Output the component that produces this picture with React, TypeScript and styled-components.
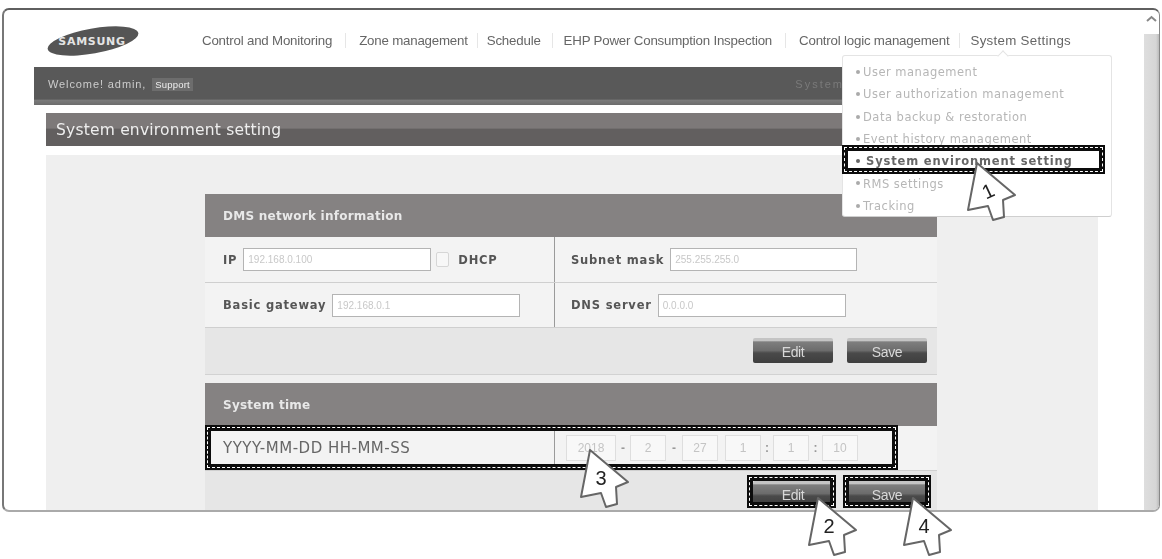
import React from 'react';
import styled, { createGlobalStyle } from 'styled-components';

const GlobalStyle = createGlobalStyle`
  html, body {
    margin: 0;
    padding: 0;
    background: #fff;
    overflow: hidden;
  }
  * {
    box-sizing: border-box;
  }
`;

const Page = styled.div`
  position: relative;
  width: 1162px;
  height: 559px;
  padding: 8px 2px 47px;
  filter: blur(0.6px);
  font-family: 'Liberation Sans', Arial, sans-serif;
`;

const Frame = styled.div`
  display: flex;
  height: 100%;
  border: 1px solid #888;
  border-top: 2px solid #5f5f5f;
  border-left: 2px solid #777;
  border-bottom: 2px solid #aaa;
  border-radius: 7px;
  overflow: hidden;
  background: #fff;
`;

const Main = styled.div`
  flex: 1;
  min-width: 0;
  display: flex;
  flex-direction: column;
`;

const ScrollBar = styled.div`
  width: 15px;
  display: flex;
  flex-direction: column;
`;

const ScrollButton = styled.div`
  height: 24px;
  display: flex;
  justify-content: center;
  padding-top: 5px;
  color: #888;
`;

const ScrollTrack = styled.div`
  flex: 1;
  background: linear-gradient(to right, #dedede 0, #d6d6d6 80%, #bbb 100%);
`;

const Header = styled.div`
  height: 57px;
  display: flex;
  align-items: center;
  padding: 4px 0 0 43px;
`;

const LogoBox = styled.svg`
  width: 92px;
  height: 34px;
  flex: none;
`;

const Nav = styled.nav`
  display: flex;
  align-items: center;
  margin-left: 63px;
`;

const NavItem = styled.span<{ $gap: number }>`
  font-size: 13.3px;
  color: #666;
  letter-spacing: -0.2px;
  white-space: nowrap;
  padding-right: ${(props) => props.$gap}px;
  margin-right: ${(props) => props.$gap}px;
  border-right: 1px solid #e6e6e6;
  &:last-child {
    border-right: none;
    letter-spacing: 0.3px;
  }
`;

const WelcomeBar = styled.div`
  height: 38px;
  margin: 0 45px 0 30px;
  display: flex;
  align-items: center;
  justify-content: space-between;
  padding: 0 255px 4px 14px;
  background: linear-gradient(to bottom, #595959 0, #595959 84%, #7a7a7a 88%, #6c6c6c 100%);
  font-size: 11px;
  color: #ccc;
  letter-spacing: 0.9px;
`;

const Support = styled.span`
  color: #eee;
  font-size: 9.5px;
  letter-spacing: 0.2px;
  margin-left: 6px;
  padding: 1px 3px;
  background: #6d6d6d;
`;

const Faint = styled.span`
  color: #7a7a7a;
  letter-spacing: 2px;
`;

const TitleBar = styled.div`
  height: 33px;
  margin: 8px 46px 0 42px;
  padding-left: 10px;
  display: flex;
  align-items: center;
  background: linear-gradient(to bottom, #7d7979 0, #7d7979 45%, #625f5f 50%, #625f5f 100%);
  font-family: 'DejaVu Sans', sans-serif;
  font-size: 15.5px;
  color: #eee;
  letter-spacing: 0.2px;
`;

const Content = styled.div`
  flex: 1;
  min-height: 0;
  margin: 9px 46px 0 42px;
  padding: 39px 0 0 159px;
  background: #efefef;
  overflow: hidden;
`;

const Panel = styled.section`
  width: 732px;
  margin-bottom: 8px;
  background: #e6e6e6;
  border-bottom: 1px solid #d2d2d2;
`;

const PanelHeader = styled.div`
  height: 43px;
  display: flex;
  align-items: center;
  padding-left: 18px;
  background: #858282;
  font-family: 'DejaVu Sans', sans-serif;
  font-size: 12px;
  font-weight: bold;
  letter-spacing: 0.25px;
  color: #e8e8e8;
`;

const Row = styled.div<{ $height: number }>`
  display: grid;
  grid-template-columns: 349px 1fr;
  height: ${(props) => props.$height}px;
  background: #f3f3f3;
  border-bottom: 1px solid #cfcfcf;
`;

const Cell = styled.div`
  display: flex;
  align-items: center;
  padding-left: 18px;
  & + & {
    padding-left: 11px;
    border-left: 1px solid #9a9a9a;
  }
`;

const FieldCell = styled(Cell)`
  gap: 6px;
  & + & {
    padding-left: 16px;
  }
`;

const Label = styled.span`
  font-family: 'DejaVu Sans', sans-serif;
  font-size: 11.5px;
  font-weight: bold;
  letter-spacing: 0.8px;
  color: #555;
  white-space: nowrap;
`;

const TimeLabel = styled.span`
  font-family: 'DejaVu Sans', sans-serif;
  font-size: 15px;
  letter-spacing: 0.5px;
  color: #666;
  white-space: nowrap;
`;

const Field = styled.div<{ $w: number }>`
  width: ${(props) => props.$w}px;
  height: 23px;
  flex: none;
  display: flex;
  align-items: center;
  padding-left: 4px;
  background: #fff;
  border: 1px solid #b4b4b4;
  font-size: 10px;
  color: #c8c8c8;
`;

const CheckBox = styled.span`
  width: 13px;
  height: 15px;
  margin: 0 3px 0 -1px;
  flex: none;
  background: #f7f7f7;
  border: 1px solid #d6d6d6;
  border-radius: 2px;
`;

const TimeField = styled.div<{ $w: number }>`
  width: ${(props) => props.$w}px;
  height: 26px;
  flex: none;
  display: flex;
  align-items: center;
  justify-content: center;
  background: #f8f8f8;
  border: 1px solid #dedede;
  font-size: 12px;
  color: #c4c4c4;
`;

const TimeSep = styled.span<{ $w: number }>`
  width: ${(props) => props.$w}px;
  flex: none;
  text-align: center;
  font-size: 12px;
  font-weight: bold;
  color: #999;
`;

const Footer = styled.div<{ $height: number }>`
  height: ${(props) => props.$height}px;
  display: flex;
  justify-content: flex-end;
  align-items: flex-start;
  gap: 14px;
  padding: 10px 10px 0 0;
`;

const Button = styled.button`
  width: 80px;
  height: 25px;
  padding: 2px 0 0;
  border: none;
  border-radius: 2px;
  background: linear-gradient(to bottom, #c4c4c4 0, #c4c4c4 10%, #7e7e7e 16%, #6c6c6c 50%, #4a4a4a 60%, #3e3e3e 100%);
  font-family: 'Liberation Sans', Arial, sans-serif;
  font-size: 14px;
  letter-spacing: -0.4px;
  color: #d8d8d8;
`;

const Menu = styled.div`
  position: absolute;
  left: 842px;
  top: 55px;
  width: 270px;
  height: 162px;
  padding: 5px 0 0 20px;
  background: #fff;
  border: 1px solid #e4e4e4;
  border-bottom-color: #cfcfcf;
  border-radius: 3px;
  &::before {
    content: '';
    position: absolute;
    left: 156px;
    top: -4px;
    width: 7px;
    height: 7px;
    background: #fff;
    border-left: 1px solid #e4e4e4;
    border-top: 1px solid #e4e4e4;
    transform: rotate(45deg);
  }
`;

const MenuItem = styled.div<{ $active?: boolean }>`
  position: relative;
  height: 22.3px;
  display: flex;
  align-items: center;
  font-family: 'DejaVu Sans', sans-serif;
  font-size: 11.5px;
  letter-spacing: ${(props) => (props.$active ? '0.85px' : '0.5px')};
  padding-left: ${(props) => (props.$active ? '3px' : '0')};
  font-weight: ${(props) => (props.$active ? 'bold' : 'normal')};
  color: ${(props) => (props.$active ? '#666' : '#b6b6b6')};
  white-space: nowrap;
  &::before {
    content: '';
    position: absolute;
    left: -7px;
    top: 9px;
    width: 4px;
    height: 4px;
    border-radius: 50%;
    background: ${(props) => (props.$active ? '#666' : '#aaa')};
  }
`;

const Callout = styled.div<{ $x: number; $y: number; $w: number; $h: number }>`
  position: absolute;
  left: ${(props) => props.$x}px;
  top: ${(props) => props.$y}px;
  width: ${(props) => props.$w}px;
  height: ${(props) => props.$h}px;
  border: 6px solid #0c0c0c;
  outline: 1.6px dashed #fff;
  outline-offset: -3.8px;
`;

const PointerSvg = styled.svg<{ $x: number; $y: number }>`
  position: absolute;
  left: ${(props) => props.$x - 12}px;
  top: ${(props) => props.$y - 2}px;
  width: 64px;
  height: 66px;
  overflow: visible;
`;

const Pointer = ({ x, y, n, rotate }: { x: number; y: number; n: string; rotate: number }) => (
  <PointerSvg $x={x} $y={y} viewBox="0 0 64 66">
    <polygon
      points="12,2 50,34 38,39 39,56 28,59 23,45 3,49"
      fill="#fff"
      stroke="#666"
      strokeWidth="2"
      strokeLinejoin="round"
    />
    <text
      x="23"
      y="37"
      fontFamily="Liberation Sans, sans-serif"
      fontSize="20"
      fill="#222"
      textAnchor="middle"
      transform={`rotate(${rotate} 23 30)`}
    >
      {n}
    </text>
  </PointerSvg>
);

const Logo = () => (
  <LogoBox viewBox="0 0 92 34">
    <ellipse cx="46" cy="17" rx="46" ry="12.5" fill="#555" transform="rotate(-10 46 17)" />
    <text
      x="45"
      y="21"
      textAnchor="middle"
      fontFamily="DejaVu Sans, sans-serif"
      fontWeight="bold"
      fontSize="11"
      letterSpacing="0.7"
      fill="#e4e4e4"
    >
      SAMSUNG
    </text>
  </LogoBox>
);

const navList = [
  { name: 'Control and Monitoring', gap: 13 },
  { name: 'Zone management', gap: 9 },
  { name: 'Schedule', gap: 11 },
  { name: 'EHP Power Consumption Inspection', gap: 13 },
  { name: 'Control logic management', gap: 10 },
  { name: 'System Settings', gap: 0 },
];

const menuList = [
  'User management',
  'User authorization management',
  'Data backup & restoration',
  'Event history management',
  'System environment setting',
  'RMS settings',
  'Tracking',
];

export default function App() {
  return (
    <Page>
      <GlobalStyle />
      <Frame>
        <Main>
          <Header>
            <Logo />
            <Nav>
              {navList.map((item) => (
                <NavItem key={item.name} $gap={item.gap}>
                  {item.name}
                </NavItem>
              ))}
            </Nav>
          </Header>
          <WelcomeBar>
            <span>
              Welcome! admin,<Support>Support</Support>
            </span>
            <Faint>System</Faint>
          </WelcomeBar>
          <TitleBar>System environment setting</TitleBar>
          <Content>
            <Panel>
              <PanelHeader>DMS network information</PanelHeader>
              <Row $height={46}>
                <FieldCell>
                  <Label>IP</Label>
                  <Field $w={188}>192.168.0.100</Field>
                  <CheckBox />
                  <Label>DHCP</Label>
                </FieldCell>
                <FieldCell>
                  <Label>Subnet mask</Label>
                  <Field $w={187}>255.255.255.0</Field>
                </FieldCell>
              </Row>
              <Row $height={45}>
                <FieldCell>
                  <Label>Basic gateway</Label>
                  <Field $w={188}>192.168.0.1</Field>
                </FieldCell>
                <FieldCell>
                  <Label>DNS server</Label>
                  <Field $w={188}>0.0.0.0</Field>
                </FieldCell>
              </Row>
              <Footer $height={46}>
                <Button>Edit</Button>
                <Button>Save</Button>
              </Footer>
            </Panel>
            <Panel>
              <PanelHeader>System time</PanelHeader>
              <Row $height={45}>
                <Cell>
                  <TimeLabel>YYYY-MM-DD HH-MM-SS</TimeLabel>
                </Cell>
                <Cell>
                  <TimeField $w={50}>2018</TimeField>
                  <TimeSep $w={14}>-</TimeSep>
                  <TimeField $w={36}>2</TimeField>
                  <TimeSep $w={16}>-</TimeSep>
                  <TimeField $w={36}>27</TimeField>
                  <TimeSep $w={7} />
                  <TimeField $w={36}>1</TimeField>
                  <TimeSep $w={12}>:</TimeSep>
                  <TimeField $w={36}>1</TimeField>
                  <TimeSep $w={13}>:</TimeSep>
                  <TimeField $w={36}>10</TimeField>
                </Cell>
              </Row>
              <Footer $height={46}>
                <Button>Edit</Button>
                <Button>Save</Button>
              </Footer>
            </Panel>
          </Content>
        </Main>
        <ScrollBar>
          <ScrollButton>
            <svg width="11" height="8" viewBox="0 0 11 8">
              <path d="M1 6 L5.5 2 L10 6" fill="none" stroke="#888" strokeWidth="2" />
            </svg>
          </ScrollButton>
          <ScrollTrack />
        </ScrollBar>
      </Frame>

      <Menu>
        {menuList.map((name) => (
          <MenuItem key={name} $active={name === 'System environment setting'}>
            {name}
          </MenuItem>
        ))}
      </Menu>

      <Callout $x={842} $y={145} $w={263} $h={29} />
      <Callout $x={205} $y={425} $w={693} $h={45} />
      <Callout $x={747} $y={475} $w={89} $h={33} />
      <Callout $x={843} $y={475} $w={88} $h={33} />

      <Pointer x={977} y={163} n="1" rotate={-25} />
      <Pointer x={818} y={498} n="2" rotate={0} />
      <Pointer x={590} y={450} n="3" rotate={0} />
      <Pointer x={913} y={498} n="4" rotate={0} />
    </Page>
  );
}
